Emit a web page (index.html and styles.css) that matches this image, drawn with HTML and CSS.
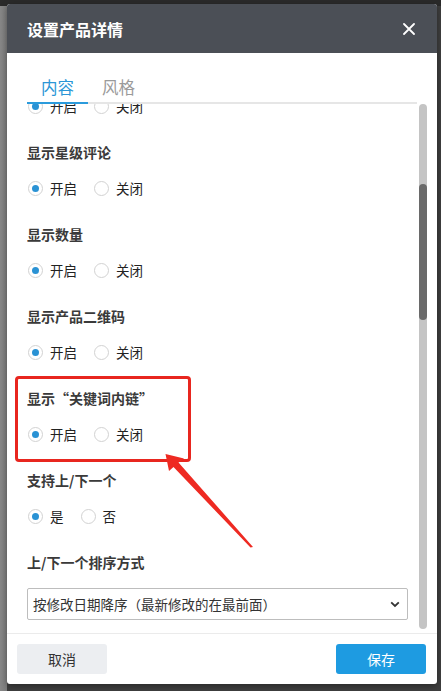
FILE: index.html
```html
<!DOCTYPE html>
<html lang="zh-CN">
<head>
<meta charset="utf-8">
<title>设置产品详情</title>
<link rel="stylesheet" href="styles.css">
</head>
<body>
<div class="page">
  <div class="topbar"></div>
  <div class="modal">
    <header class="modal-head">
      <h1 class="modal-title">设置产品详情</h1>
      <span class="close" aria-label="关闭">
        <svg width="12" height="12" viewBox="0 0 12 12"><path d="M1 1 L11 11 M11 1 L1 11" stroke="#fff" stroke-width="1.8" stroke-linecap="round" fill="none"/></svg>
      </span>
    </header>
    <nav class="tabs">
      <span class="tab active">内容</span>
      <span class="tab">风格</span>
    </nav>
    <div class="scroll">
      <div class="content">
        <div class="radios first">
          <span class="radio on"><i class="dot"></i>开启</span>
          <span class="radio"><i class="dot"></i>关闭</span>
        </div>
        <div class="group">
          <div class="label">显示星级评论</div>
          <div class="radios">
            <span class="radio on"><i class="dot"></i>开启</span>
            <span class="radio"><i class="dot"></i>关闭</span>
          </div>
        </div>
        <div class="group">
          <div class="label">显示数量</div>
          <div class="radios">
            <span class="radio on"><i class="dot"></i>开启</span>
            <span class="radio"><i class="dot"></i>关闭</span>
          </div>
        </div>
        <div class="group">
          <div class="label">显示产品二维码</div>
          <div class="radios">
            <span class="radio on"><i class="dot"></i>开启</span>
            <span class="radio"><i class="dot"></i>关闭</span>
          </div>
        </div>
        <div class="group">
          <div class="label">显示“关键词内链”</div>
          <div class="radios">
            <span class="radio on"><i class="dot"></i>开启</span>
            <span class="radio"><i class="dot"></i>关闭</span>
          </div>
        </div>
        <div class="group">
          <div class="label">支持上/下一个</div>
          <div class="radios">
            <span class="radio on"><i class="dot"></i>是</span>
            <span class="radio"><i class="dot"></i>否</span>
          </div>
        </div>
        <div class="group">
          <div class="label">上/下一个排序方式</div>
          <div class="select">
            <span class="select-text">按修改日期降序（最新修改的在最前面）</span>
            <svg class="chev" width="10" height="7" viewBox="0 0 10 7"><path d="M1.2 1.3 L5 5 L8.8 1.3" stroke="#333" stroke-width="1.8" fill="none"/></svg>
          </div>
        </div>
      </div>
      <div class="scrollbar"><div class="thumb"></div></div>
    </div>
    <footer class="modal-foot">
      <span class="btn btn-cancel">取消</span>
      <span class="btn btn-save">保存</span>
    </footer>
  </div>
  <svg class="annot" width="441" height="691" viewBox="0 0 441 691">
    <rect x="16.5" y="377.5" width="173" height="83" rx="2.5" fill="none" stroke="#e8261f" stroke-width="3"/>
    <polygon points="165.5,454 184,458.5 178.5,462.5 253,547 250.5,547.5 173.5,467 169,471" fill="#ee2a22"/>
  </svg>
</div>
</body>
</html>
```

FILE: styles.css
```css
* { box-sizing: border-box; }
html, body { margin: 0; padding: 0; }
body {
  width: 441px;
  height: 691px;
  overflow: hidden;
  background: linear-gradient(to right, #878787 0, #7c7c7c 7px, #3e3e3e 7px, #3e3e3e 100%);
  font-family: "Noto Sans CJK SC", "Microsoft YaHei", sans-serif;
  color: #333;
}
.page {
  position: relative;
  width: 441px;
  height: 691px;
  padding: 4px 4px 7px 7px;
}
.topbar {
  position: absolute;
  left: 0; top: 0; right: 0;
  height: 6px;
  background: #2a2a2a;
}
.modal {
  position: relative;
  width: 430px;
  height: 680px;
  background: #fff;
  border-radius: 3px;
  overflow: hidden;
  display: flex;
  flex-direction: column;
  box-shadow: 0 2px 6px rgba(0,0,0,0.35);
}
.modal-head {
  height: 49px;
  flex: none;
  background: #4b4f56;
  display: flex;
  align-items: center;
  justify-content: space-between;
  padding: 0 22px 0 20px;
}
.modal-title {
  margin: 0;
  font-size: 16px;
  font-weight: bold;
  color: #fff;
  line-height: 20px;
}
.close { display: flex; width: 12px; height: 12px; }
.tabs {
  flex: none;
  margin: 0 20px;
  padding-top: 20px;
  display: flex;
  border-bottom: 2px solid #e6e6e6;
  height: 51px;
}
.tab {
  padding: 0 14px;
  line-height: 29px;
  font-size: 16.5px;
  color: #9a9a9a;
  margin-bottom: -2px;
  border-bottom: 2px solid transparent;
}
.tab.active {
  color: #2b96d6;
  border-bottom-color: #2b9bdc;
}
.scroll {
  flex: 1;
  min-height: 0;
  display: flex;
  padding: 0 10px 0 20px;
}
.content {
  flex: 1;
  overflow: hidden;
  padding-right: 11px;
}
.radios {
  display: flex;
  align-items: center;
  height: 20px;
  padding-left: 1px;
}
.radios.first { margin-top: -8px; }
.radio {
  display: inline-flex;
  align-items: center;
  gap: 7px;
  margin-right: 17px;
  font-size: 13.5px;
  color: #222;
  line-height: 20px;
}
.dot {
  width: 15px;
  height: 15px;
  border-radius: 50%;
  border: 1px solid #d2d2d2;
  background: #fff;
  display: flex;
  align-items: center;
  justify-content: center;
}
.radio.on .dot::after {
  content: "";
  width: 7px;
  height: 7px;
  border-radius: 50%;
  background: #2a92d4;
}
.group { margin-top: 26px; }
.label {
  font-size: 14px;
  font-weight: bold;
  color: #3a3a3a;
  line-height: 20px;
  margin-bottom: 16px;
}
.select {
  height: 32px;
  border: 1px solid #bdbdbd;
  border-radius: 2px;
  display: flex;
  align-items: center;
  justify-content: space-between;
  padding: 0 7px 0 5px;
  font-size: 13.5px;
  color: #333;
}
.scrollbar {
  flex: none;
  width: 8px;
  margin-bottom: 4px;
  background: #c4c4c4;
  border-radius: 4px;
  position: relative;
}
.thumb {
  margin-top: 80px;
  height: 136px;
  background: #6a6a6a;
  border-radius: 4px;
}
.modal-foot {
  flex: none;
  height: 51px;
  border-top: 1px solid #ebebeb;
  padding: 10px 11px 10px 10px;
  display: flex;
  justify-content: space-between;
  align-items: flex-start;
}
.btn {
  width: 90px;
  height: 30px;
  border-radius: 3px;
  display: flex;
  align-items: center;
  justify-content: center;
  font-size: 14px;
}
.btn-cancel { background: #eceef1; color: #333; }
.btn-save { background: #1e9be1; color: #fff; }
.annot {
  position: absolute;
  left: 0;
  top: 0;
  pointer-events: none;
}
```
